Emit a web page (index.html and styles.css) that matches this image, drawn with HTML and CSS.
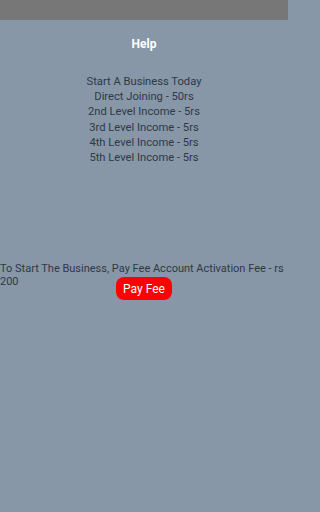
FILE: index.html
```html
<!DOCTYPE html>
<html>
<head>
<meta charset="utf-8">
<link rel="stylesheet" href="styles.css">
</head>
<body>
<div class="status"></div>
<main class="screen">
  <h1 class="title">Help</h1>
  <div class="info">
    <p>Start A Business Today</p>
    <p>Direct Joining - 50rs</p>
    <p>2nd Level Income - 5rs</p>
    <p>3rd Level Income - 5rs</p>
    <p>4th Level Income - 5rs</p>
    <p>5th Level Income - 5rs</p>
  </div>
  <p class="fee">To Start The Business, Pay Fee Account Activation Fee - rs 200</p>
  <div class="action"><button class="pay">Pay Fee</button></div>
</main>
</body>
</html>
```

FILE: styles.css
```css
* { box-sizing: border-box; }
html, body { margin: 0; padding: 0; }
html { background: #8797a7; }
body {
  width: 288px;
  height: 512px;
  background: #8797a7;
  font-family: Roboto, "Liberation Sans", sans-serif;
  overflow: hidden;
}
.status {
  height: 20px;
  background: #777777;
}
.screen {
  display: flex;
  flex-direction: column;
}
.title {
  margin: 16px 0 0;
  font-size: 12px;
  line-height: 16px;
  font-weight: bold;
  color: #ffffff;
  text-align: center;
}
.info {
  margin-top: 22px;
  text-align: center;
  color: #2e3945;
  font-size: 11.2px;
  line-height: 15.2px;
}
.info p { margin: 0; }
.fee {
  margin: 97px 0 0;
  font-size: 11px;
  line-height: 13px;
  color: #2e3945;
}
.action {
  display: flex;
  justify-content: center;
  margin-top: -11px;
}
.pay {
  background: #ff0000;
  color: #ffffff;
  border: none;
  border-radius: 8px;
  font-family: Roboto, "Liberation Sans", sans-serif;
  font-size: 12px;
  width: 56px;
  height: 23px;
  padding: 0;
}
```
